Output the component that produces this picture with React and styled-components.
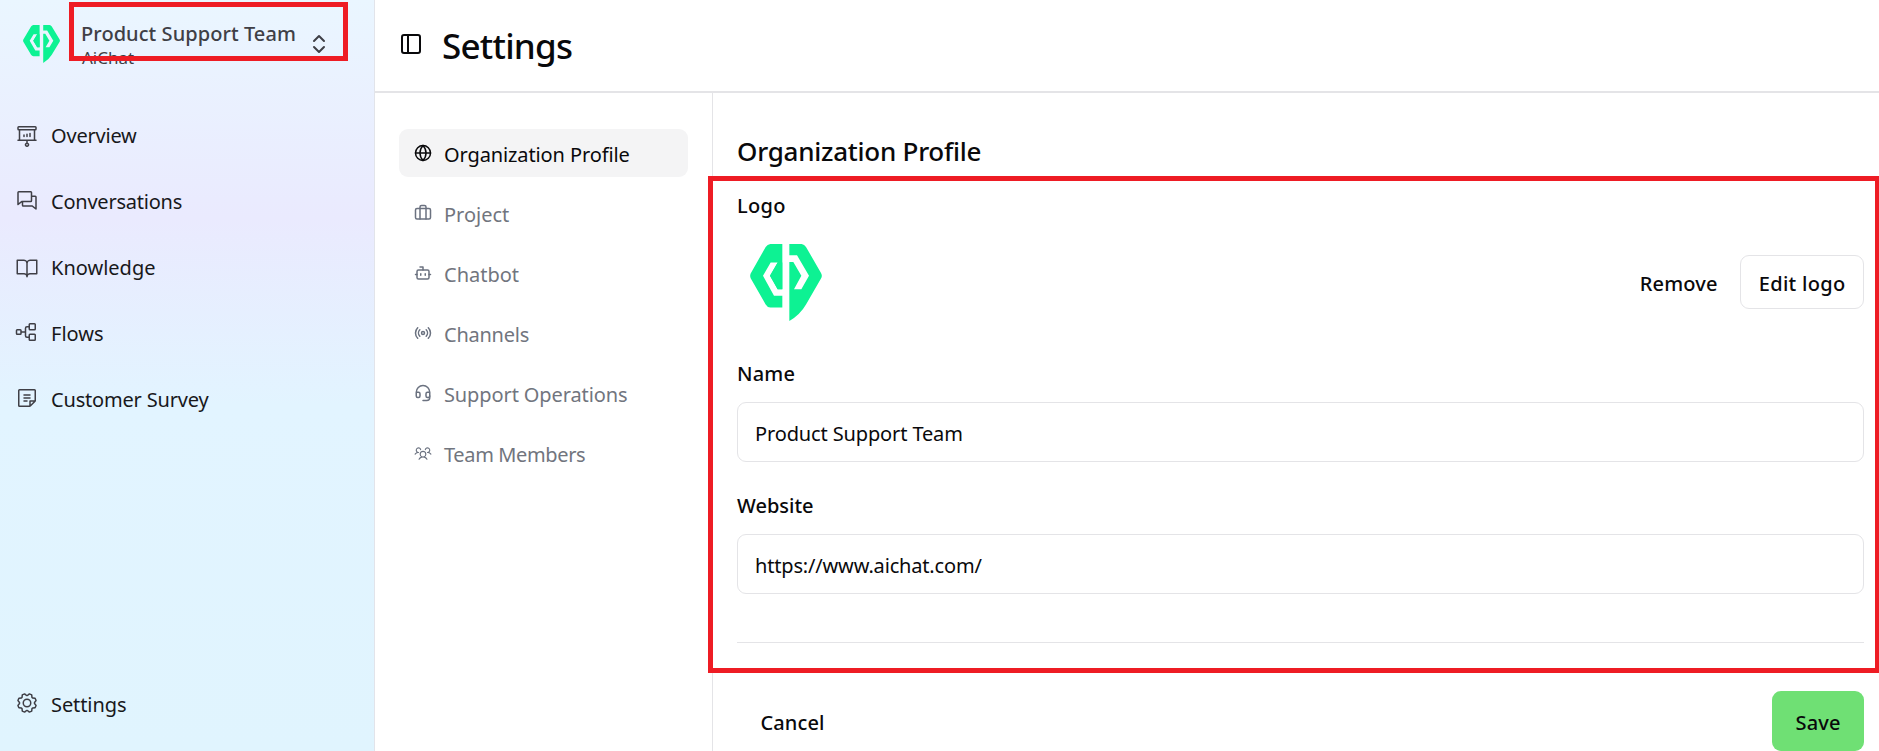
import React from 'react';
import styled, { createGlobalStyle, css } from 'styled-components';
import { Globe, Briefcase, Bot, Radio, Headset, PanelLeft, ChevronsUpDown } from 'lucide-react';
import {
  PiProjectorScreenChart,
  PiChats,
  PiBookOpen,
  PiTreeStructure,
  PiNote,
  PiGear,
  PiUsersThree,
} from 'react-icons/pi';

const GlobalStyle = createGlobalStyle`
  *, *::before, *::after { box-sizing: border-box; }
  body {
    margin: 0;
    overflow: hidden;
    background: #fff;
    color: #09090b;
    font-family: "Noto Sans", "Open Sans", sans-serif;
    font-size: 20px;
    line-height: 28px;
  }
`;

const Page = styled.div`
  position: relative;
  display: flex;
  width: 1879px;
  height: 751px;
  overflow: hidden;
`;

const Sidebar = styled.aside`
  display: flex;
  flex-direction: column;
  flex: none;
  width: 375px;
  padding-bottom: 14px;
  border-right: 1px solid #e2e4ea;
  background: linear-gradient(180deg, #eaf6ff 0%, #eaeafe 29%, #e2f4ff 54%, #e0f4fe 100%);
`;

const TeamSwitcher = styled.div`
  display: flex;
  align-items: flex-start;
  height: 102px;
  padding: 20px 43px 0 23px;
  color: #3f3f46;
`;

const LogoMark = styled.svg`
  display: block;
  flex: none;
  width: ${(p) => p.$w}px;
  height: ${(p) => p.$h}px;
  margin: ${(p) => p.$margin || 0};
  fill: #0df293;
`;

const TeamText = styled.div`
  flex: 1;
  padding-left: 21px;
  white-space: nowrap;
`;

const TeamName = styled.div`
  font-weight: 500;
  letter-spacing: 0.06px;
`;

const TeamOrg = styled.div`
  font-size: 17px;
  line-height: 20px;
  padding-left: 1px;
`;

const SwitchIcon = styled(ChevronsUpDown)`
  flex: none;
  margin-top: 12px;
`;

const SideNav = styled.nav`
  display: flex;
  flex-direction: column;
  flex: 1;
`;

const SideItem = styled.a`
  display: flex;
  align-items: center;
  gap: 12px;
  height: 66px;
  padding: 2px 0 0 15px;
  color: #18181b;
  letter-spacing: ${(p) => p.$ls || 0}px;

  ${(p) => p.$last && css`margin-top: auto;`}

  svg {
    width: 24px;
    height: 24px;
    margin-bottom: ${(p) => p.$lift || 0}px;
    color: #3f3f46;
  }
`;

const Main = styled.main`
  display: flex;
  flex-direction: column;
  flex: 1;
  min-width: 0;
`;

const Header = styled.header`
  display: flex;
  align-items: flex-start;
  gap: 19px;
  height: 93px;
  padding: 22px 0 0 24px;
  border-bottom: 2px solid #e4e4e7;

  svg { margin-top: 10px; }
`;

const Title = styled.h1`
  margin: 0;
  font-size: 35px;
  font-weight: 500;
  line-height: 47px;
  letter-spacing: -0.75px;
`;

const Body = styled.div`
  display: flex;
  flex: 1;
`;

const SubNav = styled.nav`
  display: flex;
  flex-direction: column;
  gap: 12px;
  flex: none;
  width: 338px;
  padding: 36px 24px 0;
  border-right: 1px solid #e4e4e7;
`;

const SubItem = styled.a`
  display: flex;
  align-items: center;
  gap: 12px;
  height: 48px;
  padding: 3px 0 0 15px;
  border-radius: 9px;
  background: ${(p) => (p.$active ? '#f4f4f5' : 'transparent')};
  color: ${(p) => (p.$active ? '#09090b' : '#71757e')};
  letter-spacing: ${(p) => p.$ls || 0}px;
  white-space: nowrap;

  svg {
    width: 18px;
    height: 18px;
    margin-bottom: 4px;
    color: ${(p) => (p.$active ? '#09090b' : '#6b7280')};
  }
`;

const Content = styled.section`
  flex: 1;
  min-width: 0;
  padding: 40px 15px 0 24px;
`;

const SectionTitle = styled.h2`
  margin: 0 0 23px;
  font-size: 26px;
  font-weight: 500;
  line-height: 36px;
  letter-spacing: -0.24px;
`;

const Label = styled.label`
  display: block;
  font-weight: 500;
  line-height: 28px;
  letter-spacing: ${(p) => p.$ls}px;
`;

const LogoRow = styled.div`
  display: flex;
  align-items: flex-start;
  justify-content: space-between;
  height: 140px;
`;

const Actions = styled.div`
  display: flex;
  align-items: center;
  padding-top: 35px;
`;

const Button = styled.button`
  height: ${(p) => p.$h}px;
  padding: 3px ${(p) => p.$px}px 0;
  border: 1px solid ${(p) => (p.$outline ? '#e4e4e7' : 'transparent')};
  border-radius: 9px;
  background: ${(p) => (p.$primary ? '#6fe074' : 'transparent')};
  background-clip: border-box;
  color: #09090b;
  font: 500 20px/28px "Noto Sans", "Open Sans", sans-serif;
  letter-spacing: ${(p) => p.$ls}px;
  white-space: nowrap;
`;

const Input = styled.input`
  display: block;
  width: 100%;
  height: 60px;
  margin: 14px 0 30px;
  padding: 2px 17px 0;
  border: 1px solid #e4e4e7;
  border-radius: 9px;
  outline: 0;
  background: #fff;
  color: #09090b;
  font: 400 20px/28px "Noto Sans", "Open Sans", sans-serif;
  letter-spacing: ${(p) => p.$ls}px;
`;

const Divider = styled.hr`
  height: 1px;
  margin: 48px 0;
  border: 0;
  background: #e4e4e7;
`;

const Footer = styled.div`
  display: flex;
  justify-content: space-between;
`;

const Highlight = styled.div`
  position: absolute;
  left: ${(p) => p.$x}px;
  top: ${(p) => p.$y}px;
  width: ${(p) => p.$w}px;
  height: ${(p) => p.$h}px;
  border: 5px solid #ee1c24;
  pointer-events: none;
`;

function Logo(props) {
  return (
    <LogoMark viewBox="149 371 216 232" preserveAspectRatio="none" {...props}>
      <path
        fillRule="evenodd"
        d="M246 371H210Q201 372 196 380L151 460Q148 467 151 474L196 553Q201 562 210 562H246V527H221L188 467L211 427H232L209 467L232 507H246ZM267 371H304Q312 372 317 380L362 458Q367 467 362 475L317 553Q300 583 267 603V425H279L303 467L281 507H303L326 467L290 405H267Z"
      />
      <path d="M246 427H232L209 467L232 507H246Z" />
    </LogoMark>
  );
}

const sideItems = [
  { label: 'Overview', Icon: PiProjectorScreenChart, ls: -0.2, lift: 3 },
  { label: 'Conversations', Icon: PiChats, ls: -0.23, lift: 4 },
  { label: 'Knowledge', Icon: PiBookOpen, ls: 0, lift: 3 },
  { label: 'Flows', Icon: PiTreeStructure, ls: 0, lift: 4 },
  { label: 'Customer Survey', Icon: PiNote, ls: -0.18, lift: 4 },
];

const subItems = [
  { label: 'Organization Profile', Icon: Globe, ls: -0.11, active: true },
  { label: 'Project', Icon: Briefcase, ls: 0 },
  { label: 'Chatbot', Icon: Bot, ls: 0 },
  { label: 'Channels', Icon: Radio, ls: -0.24 },
  { label: 'Support Operations', Icon: Headset, ls: -0.11 },
  { label: 'Team Members', Icon: PiUsersThree, ls: -0.36 },
];

export default function App() {
  return (
    <>
      <GlobalStyle />
      <Page>
        <Sidebar>
          <TeamSwitcher>
            <Logo $w={37} $h={38} $margin="5px 0 0" />
            <TeamText>
              <TeamName>Product Support Team</TeamName>
              <TeamOrg>AiChat</TeamOrg>
            </TeamText>
            <SwitchIcon size={24} strokeWidth={2} />
          </TeamSwitcher>
          <SideNav>
            {sideItems.map(({ label, Icon, ls, lift }) => (
              <SideItem key={label} $ls={ls} $lift={lift}>
                <Icon />
                {label}
              </SideItem>
            ))}
            <SideItem $ls={-0.09} $lift={4} $last>
              <PiGear />
              Settings
            </SideItem>
          </SideNav>
        </Sidebar>
        <Main>
          <Header>
            <PanelLeft size={24} strokeWidth={2} />
            <Title>Settings</Title>
          </Header>
          <Body>
            <SubNav>
              {subItems.map(({ label, Icon, ls, active }) => (
                <SubItem key={label} $ls={ls} $active={active}>
                  <Icon />
                  {label}
                </SubItem>
              ))}
            </SubNav>
            <Content>
              <SectionTitle>Organization Profile</SectionTitle>
              <Label $ls={0.3}>Logo</Label>
              <LogoRow>
                <Logo $w={72} $h={77} $margin="24px 0 0 13px" />
                <Actions>
                  <Button $h={54} $px={21.5} $ls={0.2}>Remove</Button>
                  <Button $h={54} $px={17.5} $ls={0.3} $outline>Edit logo</Button>
                </Actions>
              </LogoRow>
              <Label $ls={0.2}>Name</Label>
              <Input $ls={-0.13} defaultValue="Product Support Team" />
              <Label $ls={0}>Website</Label>
              <Input $ls={-0.17} defaultValue="https://www.aichat.com/" />
              <Divider />
              <Footer>
                <Button $h={60} $px={22.5} $ls={0.1}>Cancel</Button>
                <Button $h={60} $px={22.5} $ls={0.13} $primary>Save</Button>
              </Footer>
            </Content>
          </Body>
        </Main>
        <Highlight $x={69} $y={2} $w={279} $h={59} />
        <Highlight $x={708} $y={176} $w={1172} $h={497} />
      </Page>
    </>
  );
}
